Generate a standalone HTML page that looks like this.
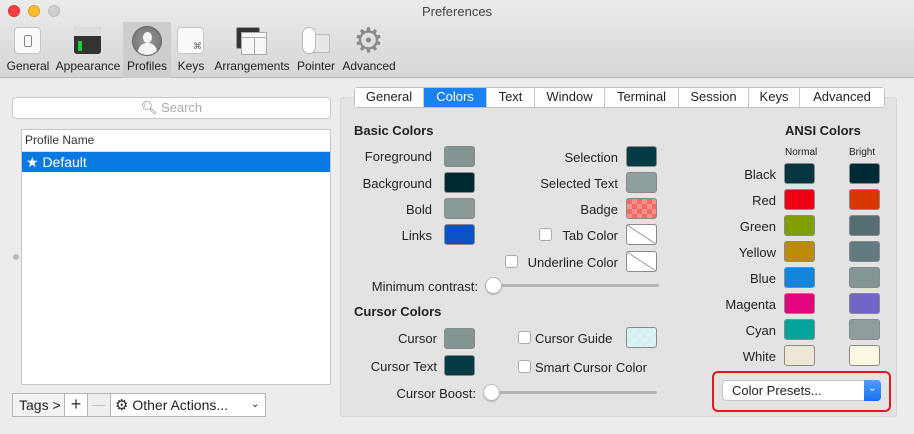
<!DOCTYPE html>
<html><head><meta charset="utf-8"><style>
*{box-sizing:border-box;margin:0;padding:0}
body{width:914px;height:434px;overflow:hidden;background:#ececec;font-family:"Liberation Sans",sans-serif;font-size:13px;color:#222;position:relative}
.a{position:absolute}
.top{left:0;top:0;width:914px;height:78px;background:linear-gradient(#ebebeb,#d6d6d6);border-bottom:1px solid #b8b8b8}
.dot{width:12px;height:12px;border-radius:50%;top:5px}
.tl{font-size:12px;color:#222;top:59px;text-align:center}
.sw{width:31px;height:21px;border:1px solid #8a8a8a;border-radius:3px}
.lbl{text-align:right;white-space:nowrap}
.cb{width:13px;height:13px;border:1px solid #aaa;border-radius:3px;background:#fff}
.tab{top:88px;height:19px;line-height:18px;text-align:center;border-right:1px solid #c8c8c8;background:#fff}
.slider{height:3px;background:#b5b5b5;border-radius:2px}
.knob{width:17px;height:17px;border-radius:50%;background:#fff;border:1px solid #bbb;box-shadow:0 1px 1px rgba(0,0,0,.2)}
.none{background:linear-gradient(to top right,#fff 48%,#666 50%,#fff 52%) ,#fff}
.ck{background-image:linear-gradient(45deg,rgba(255,255,255,.25) 25%,transparent 25%,transparent 75%,rgba(255,255,255,.25) 75%),linear-gradient(45deg,rgba(255,255,255,.25) 25%,transparent 25%,transparent 75%,rgba(255,255,255,.25) 75%);background-size:10px 10px;background-position:0 0,5px 5px}
</style></head><body>
<div class="a top"></div>
<div class="a dot" style="left:8px;background:#fc3d3f;border:1px solid #e0302f"></div>
<div class="a dot" style="left:28px;background:#fdbc2c;border:1px solid #e0a020"></div>
<div class="a dot" style="left:48px;background:#cfcfcf;border:1px solid #bbb"></div>
<div class="a" style="left:0;width:914px;top:4px;text-align:center;font-size:13px;color:#444">Preferences</div>
<div class="a" style="left:123px;top:22px;width:48px;height:56px;background:#cdcdcd"></div>
<div class="a" style="left:14px;top:27px;width:27px;height:27px;background:#fafafa;border:1px solid #c4c4c4;border-radius:4px"><div class="a" style="left:9px;top:7px;width:8px;height:12px;border:1px solid #888;border-radius:2px"></div></div>
<div class="a" style="left:74px;top:27px;width:27px;height:27px;background:#333;border-radius:3px;overflow:hidden"><div class="a" style="left:0;top:0;width:27px;height:9px;background:#ddd"></div><div class="a" style="left:4px;top:14px;width:4px;height:10px;background:#1fd02c"></div></div>
<div class="a" style="left:132px;top:26px;width:30px;height:30px;border-radius:50%;background:radial-gradient(#999,#6f6f6f);border:1px solid #666;overflow:hidden"><div class="a" style="left:10px;top:5px;width:9px;height:11px;border-radius:50%;background:#f4f4f4"></div><div class="a" style="left:5px;top:16px;width:19px;height:12px;border-radius:9px 9px 3px 3px;background:#f4f4f4"></div></div>
<div class="a" style="left:177px;top:27px;width:27px;height:27px;background:#fafafa;border:1px solid #c4c4c4;border-radius:4px;font-size:9px;color:#666"><span class="a" style="left:15px;top:13px">⌘</span></div>
<div class="a" style="left:236px;top:27px;width:24px;height:22px;background:#333;border:1px solid #999;border-radius:2px"></div>
<div class="a" style="left:241px;top:32px;width:26px;height:23px;background:#f6f6f6;border:1px solid #aaa"><div class="a" style="left:0;top:4px;width:24px;height:1px;background:#aaa"></div><div class="a" style="left:12px;top:4px;width:1px;height:18px;background:#aaa"></div></div>
<div class="a" style="left:310px;top:34px;width:20px;height:19px;background:#e6e6e6;border:1px solid #bbb;border-radius:2px"></div>
<div class="a" style="left:302px;top:27px;width:14px;height:27px;background:#fdfdfd;border:1px solid #bbb;border-radius:7px"></div>
<div class="a" style="left:352px;top:25px;width:33px;height:33px;font-size:34px;line-height:33px;color:#8a8a8a;text-align:center">⚙</div>
<div class="a tl" style="left:2px;width:52px">General</div>
<div class="a tl" style="left:55px;width:66px">Appearance</div>
<div class="a tl" style="left:123px;width:48px">Profiles</div>
<div class="a tl" style="left:175px;width:32px">Keys</div>
<div class="a tl" style="left:212px;width:80px">Arrangements</div>
<div class="a tl" style="left:294px;width:44px">Pointer</div>
<div class="a tl" style="left:340px;width:58px">Advanced</div>
<div class="a" style="left:12px;top:97px;width:319px;height:22px;background:#fff;border:1px solid #c6c6c6;border-radius:4px;text-align:center;line-height:20px;color:#aaa"><span style="color:#777">&#x1F50D;&#xFE0E;</span> Search</div>
<div class="a" style="left:21px;top:129px;width:310px;height:256px;background:#fff;border:1px solid #c6c6c6"></div>
<div class="a" style="left:25px;top:133px;font-size:12px;color:#333">Profile Name</div>
<div class="a" style="left:22px;top:151px;width:308px;height:1px;background:#ddd"></div>
<div class="a" style="left:22px;top:152px;width:308px;height:20px;background:#0a7ae2;color:#fff;line-height:20px;padding-left:4px;font-size:14px">★ Default</div>
<div class="a" style="left:13px;top:254px;width:6px;height:6px;border-radius:50%;background:#bbb"></div>
<div class="a" style="left:12px;top:393px;width:254px;height:24px;background:#fff;border:1px solid #b5b5b5"></div>
<div class="a" style="left:13px;top:394px;width:51px;height:22px;background:#f3f3f3;line-height:22px;padding-left:6px;font-size:14px">Tags &gt;</div>
<div class="a" style="left:64px;top:394px;width:1px;height:22px;background:#b5b5b5"></div>
<div class="a" style="left:65px;top:393px;width:22px;height:22px;text-align:center;font-size:18px;line-height:22px;color:#333">+</div>
<div class="a" style="left:87px;top:394px;width:1px;height:22px;background:#b5b5b5"></div>
<div class="a" style="left:88px;top:394px;width:22px;height:22px;background:#eee;text-align:center;line-height:21px;color:#bbb">—</div>
<div class="a" style="left:110px;top:394px;width:1px;height:22px;background:#b5b5b5"></div>
<div class="a" style="left:115px;top:394px;line-height:22px;font-size:14px"><span style="font-size:15px">⚙</span> Other Actions...</div>
<div class="a" style="left:251px;top:394px;line-height:22px;font-size:10px">⌄</div>
<div class="a" style="left:340px;top:97px;width:557px;height:320px;background:#e3e3e3;border:1px solid #d6d6d6;border-radius:3px"></div>
<div class="a" style="left:354px;top:87px;width:531px;height:21px;border:1px solid #c0c0c0;border-radius:4px;background:#fff;overflow:hidden"></div>
<div class="a tab" style="left:355px;width:69px">General</div>
<div class="a tab" style="left:424px;width:63px;background:#1a82f0;color:#fff">Colors</div>
<div class="a tab" style="left:487px;width:48px">Text</div>
<div class="a tab" style="left:535px;width:70px">Window</div>
<div class="a tab" style="left:605px;width:74px">Terminal</div>
<div class="a tab" style="left:679px;width:70px">Session</div>
<div class="a tab" style="left:749px;width:51px">Keys</div>
<div class="a tab" style="left:800px;width:84px;border:none">Advanced</div>
<div class="a" style="left:354px;top:123px;font-weight:bold">Basic Colors</div>
<div class="a lbl" style="right:482px;top:149px">Foreground</div><div class="a sw" style="left:444px;top:146px;background:#829593"></div>
<div class="a lbl" style="right:482px;top:176px">Background</div><div class="a sw" style="left:444px;top:172px;background:#002a33"></div>
<div class="a lbl" style="right:482px;top:202px">Bold</div><div class="a sw" style="left:444px;top:198px;background:#8a9a98"></div>
<div class="a lbl" style="right:482px;top:228px">Links</div><div class="a sw" style="left:444px;top:224px;background:#0b52c4"></div>
<div class="a lbl" style="right:296px;top:150px">Selection</div><div class="a sw" style="left:626px;top:146px;background:#053b44"></div>
<div class="a lbl" style="right:296px;top:176px">Selected Text</div><div class="a sw" style="left:626px;top:172px;background:#8f9f9d"></div>
<div class="a lbl" style="right:296px;top:202px">Badge</div><div class="a sw ck" style="left:626px;top:198px;background-color:#f06b66"></div>
<div class="a cb" style="left:539px;top:228px"></div><div class="a lbl" style="right:296px;top:228px">Tab Color</div><div class="a sw none" style="left:626px;top:224px"></div>
<div class="a cb" style="left:505px;top:255px"></div><div class="a lbl" style="right:296px;top:255px">Underline Color</div><div class="a sw none" style="left:626px;top:251px"></div>
<div class="a lbl" style="right:436px;top:279px">Minimum contrast:</div>
<div class="a slider" style="left:486px;top:284px;width:173px"></div><div class="a knob" style="left:485px;top:277px"></div>
<div class="a" style="left:354px;top:304px;font-weight:bold">Cursor Colors</div>
<div class="a lbl" style="right:477px;top:331px">Cursor</div><div class="a sw" style="left:444px;top:328px;background:#829593"></div>
<div class="a lbl" style="right:477px;top:359px">Cursor Text</div><div class="a sw" style="left:444px;top:355px;background:#053b44"></div>
<div class="a cb" style="left:518px;top:331px"></div><div class="a" style="left:535px;top:331px">Cursor Guide</div><div class="a sw ck" style="left:626px;top:327px;background-color:#d4f0f0"></div>
<div class="a cb" style="left:518px;top:360px"></div><div class="a" style="left:535px;top:360px">Smart Cursor Color</div>
<div class="a lbl" style="right:438px;top:386px">Cursor Boost:</div>
<div class="a slider" style="left:484px;top:391px;width:173px"></div><div class="a knob" style="left:483px;top:384px"></div>
<div class="a" style="left:785px;top:123px;font-weight:bold">ANSI Colors</div>
<div class="a" style="left:785px;top:147px;font-size:10px">Normal</div>
<div class="a" style="left:849px;top:147px;font-size:10px">Bright</div>
<div class="a lbl" style="right:138px;top:167px">Black</div><div class="a sw" style="left:784px;top:163px;background:#073642"></div><div class="a sw" style="left:849px;top:163px;background:#002b36"></div>
<div class="a lbl" style="right:138px;top:193px">Red</div><div class="a sw" style="left:784px;top:189px;background:#ee0012"></div><div class="a sw" style="left:849px;top:189px;background:#d93600"></div>
<div class="a lbl" style="right:138px;top:219px">Green</div><div class="a sw" style="left:784px;top:215px;background:#7fa000"></div><div class="a sw" style="left:849px;top:215px;background:#566d72"></div>
<div class="a lbl" style="right:138px;top:245px">Yellow</div><div class="a sw" style="left:784px;top:241px;background:#bb8c00"></div><div class="a sw" style="left:849px;top:241px;background:#627a82"></div>
<div class="a lbl" style="right:138px;top:271px">Blue</div><div class="a sw" style="left:784px;top:267px;background:#1384dc"></div><div class="a sw" style="left:849px;top:267px;background:#839694"></div>
<div class="a lbl" style="right:138px;top:297px">Magenta</div><div class="a sw" style="left:784px;top:293px;background:#e2057d"></div><div class="a sw" style="left:849px;top:293px;background:#7165c8"></div>
<div class="a lbl" style="right:138px;top:323px">Cyan</div><div class="a sw" style="left:784px;top:319px;background:#04a49a"></div><div class="a sw" style="left:849px;top:319px;background:#8f9e9c"></div>
<div class="a lbl" style="right:138px;top:349px">White</div><div class="a sw" style="left:784px;top:345px;background:#ede8d6"></div><div class="a sw" style="left:849px;top:345px;background:#fcf7e3"></div>
<div class="a" style="left:712px;top:371px;width:179px;height:41px;border:2px solid #e8161e;border-radius:6px"></div>
<div class="a" style="left:722px;top:380px;width:159px;height:21px;background:#fff;border:1px solid #c5c5c5;border-radius:4px;line-height:19px;padding-left:9px">Color Presets...</div>
<div class="a" style="left:864px;top:380px;width:17px;height:21px;background:linear-gradient(#4aa0ff,#1a6ff0);border-radius:0 4px 4px 0;color:#fff;text-align:center;font-size:10px;line-height:17px">⌄</div>
</body></html>
